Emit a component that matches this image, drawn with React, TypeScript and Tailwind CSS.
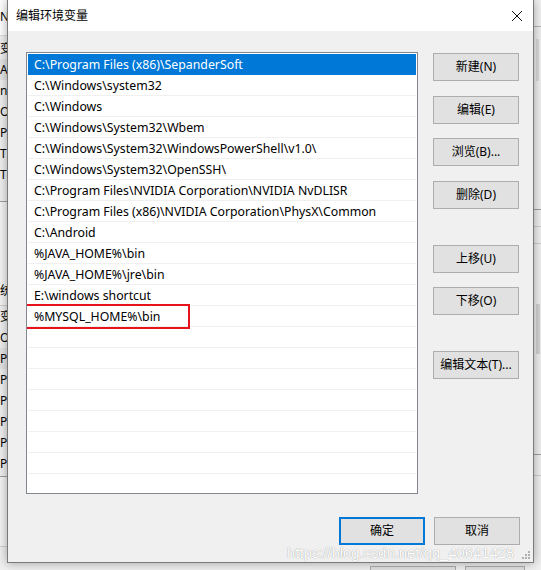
import React from 'react';

const paths = [
  'C:\\Program Files (x86)\\SepanderSoft',
  'C:\\Windows\\system32',
  'C:\\Windows',
  'C:\\Windows\\System32\\Wbem',
  'C:\\Windows\\System32\\WindowsPowerShell\\v1.0\\',
  'C:\\Windows\\System32\\OpenSSH\\',
  'C:\\Program Files\\NVIDIA Corporation\\NVIDIA NvDLISR',
  'C:\\Program Files (x86)\\NVIDIA Corporation\\PhysX\\Common',
  'C:\\Android',
  '%JAVA_HOME%\\bin',
  '%JAVA_HOME%\\jre\\bin',
  'E:\\windows shortcut',
  '%MYSQL_HOME%\\bin',
];

const bgTop = ['变', 'A', 'n', 'O', 'P', 'T', 'T'];
const bgBottom = ['变', 'O', 'P', 'P', 'P', 'P', 'P', 'P'];

function Btn({ label, primary }: { label: string; primary?: boolean }) {
  return (
    <div
      className={`w-[86px] h-[28px] flex items-center justify-center bg-[#e1e1e1] text-[12px] text-black ${
        primary ? 'border-2 border-[#0078d7]' : 'border border-[#adadad]'
      }`}
    >
      {label}
    </div>
  );
}

export default function App() {
  const rows = [...paths, ...Array(9).fill('')];

  return (
    <div
      className="relative w-[541px] h-[570px] overflow-hidden bg-[#f0f0f0]"
      style={{ fontFamily: '"Noto Sans", "Noto Sans CJK SC", sans-serif' }}
    >
      {/* window behind the dialog */}
      <div className="absolute inset-0 text-[12px] text-black">
        <div className="h-[36px] bg-white border-b border-[#dcdcdc] pt-[8px]">N</div>
        <div className="pt-[2px]">
          {bgTop.map((t, i) => (
            <div key={i} className={`h-[21px] leading-[21px] ${i === 1 ? 'bg-[#e5e5e5]' : ''}`}>
              {t}
            </div>
          ))}
        </div>
        <div className="mt-[16px] border-t border-[#a0a0a0] h-[104px] bg-[#f5f5f5] pt-[80px]">统</div>
        <div className="border-t border-[#cfcfcf]">
          {bgBottom.map((t, i) => (
            <div key={i} className={`h-[21px] leading-[21px] ${i === 2 ? 'bg-[#e5e5e5]' : ''}`}>
              {t}
            </div>
          ))}
        </div>
        <div className="mt-[2px] border-t border-[#a0a0a0] h-[70px] bg-[#f4f4f4]" />
        <div className="border-t border-[#d0d0d0]" />
        {/* right strip */}
        <div className="absolute left-[534px] top-0 w-[7px] h-full bg-[#f0f0f0]">
          <div className="h-[27px] border-b border-[#b8b8b8] bg-[#f2f2f2]" />
          <div className="ml-[2px] mt-[12px] w-[3px] h-[42px] bg-[#dadada]" />
          <div className="mt-[128px] border-t border-[#a0a0a0]" />
          <div className="mt-[16px] border-t border-[#d0d0d0]" />
          <div className="mt-[16px] border-t border-[#d0d0d0]" />
          <div className="ml-[2px] mt-[60px] w-[4px] h-[50px] bg-[#d4d4d4]" />
          <div className="mt-[100px] border-t border-[#a0a0a0]" />
          <div className="mt-[20px] border-t border-[#d0d0d0]" />
        </div>
        <div className="absolute left-[370px] top-[566px] w-[86px] h-[10px] border border-[#adadad] bg-[#e1e1e1]" />
        <div className="absolute left-[465px] top-[566px] w-[60px] h-[10px] border border-[#adadad] bg-[#e1e1e1]" />
      </div>

      {/* dialog */}
      <div className="absolute left-[7px] top-0 w-[527px] h-[563px] border border-t-0 border-[#7a7a7a] bg-[#f0f0f0] shadow-[0_0_10px_rgba(0,0,0,0.35)]">
        <div className="h-[31px] bg-white flex items-center justify-between pl-[8px] pr-[9px]">
          <span className="text-[12px] text-black">编辑环境变量</span>
          <svg width="14" height="14" viewBox="0 0 14 14">
            <path d="M2 2 L12 12 M12 2 L2 12" stroke="#111" strokeWidth="1" />
          </svg>
        </div>

        <div className="flex pl-[18px] pt-[21px]">
          <div className="w-[392px] h-[442px] border border-[#828790] bg-white p-[1px] overflow-hidden">
            {rows.map((p, i) => (
              <div
                key={i}
                className={`relative h-[21px] border-b pl-[6px] text-[12.3px] leading-[22px] whitespace-nowrap ${
                  i === 0 ? 'bg-[#0078d7] text-white border-[#0078d7]' : 'text-black border-[#f0f0f0]'
                }`}
              >
                {p}
                {i === 12 && (
                  <div className="absolute left-[-4px] top-[-2px] w-[166px] h-[25px] border-2 border-[#e8131a]" />
                )}
              </div>
            ))}
          </div>

          <div className="ml-[15px] pt-[1px] flex flex-col">
            <Btn label="新建(N)" />
            <div className="mt-[15px]">
              <Btn label="编辑(E)" />
            </div>
            <div className="mt-[14px]">
              <Btn label="浏览(B)..." />
            </div>
            <div className="mt-[15px]">
              <Btn label="删除(D)" />
            </div>
            <div className="mt-[36px]">
              <Btn label="上移(U)" />
            </div>
            <div className="mt-[14px]">
              <Btn label="下移(O)" />
            </div>
            <div className="mt-[36px]">
              <Btn label="编辑文本(T)..." />
            </div>
          </div>
        </div>

        <div className="flex justify-end gap-[9px] pr-[13px] mt-[23px]">
          <Btn label="确定" primary />
          <Btn label="取消" />
        </div>

        <div className="absolute right-[3px] bottom-[3px] grid grid-cols-3 gap-[1px]">
          {[0, 0, 1, 0, 1, 1, 1, 1, 1].map((v, i) => (
            <div key={i} className={`w-[2px] h-[2px] ${v ? 'bg-[#b0b0b0]' : ''}`} />
          ))}
        </div>
      </div>

      {/* watermark */}
      <div
        className="absolute left-[287px] top-[542px] text-[14.8px] text-white whitespace-nowrap [text-shadow:0_0_1px_rgba(0,0,0,0.45)]"
        style={{ fontFamily: '"Liberation Sans", Arial, sans-serif' }}
      >
        https://blog.csdn.net/qq_40641428
      </div>
    </div>
  );
}
